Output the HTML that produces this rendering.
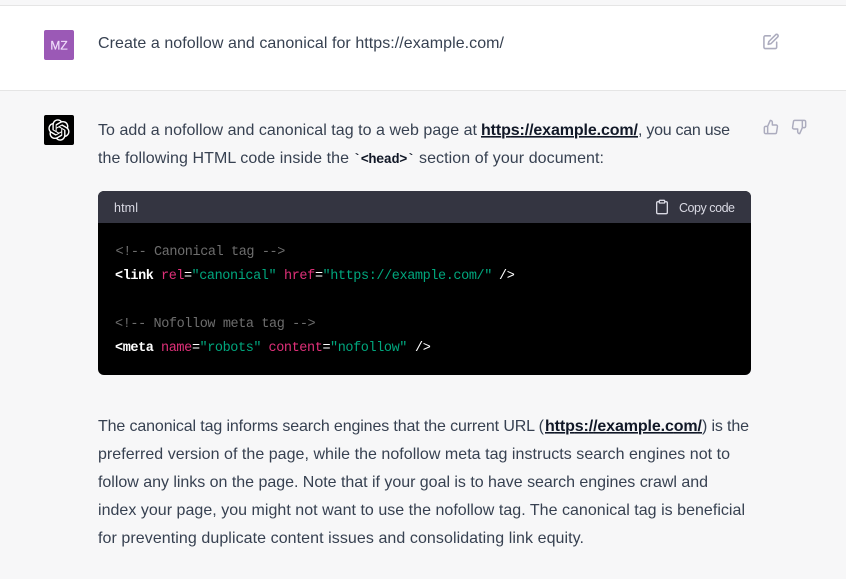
<!DOCTYPE html>
<html><head><meta charset="utf-8"><style>
html,body{margin:0;padding:0;width:846px;height:579px;overflow:hidden;background:#f7f7f8}
svg{display:block;position:absolute;left:0;top:0}
.t{font:16px "Liberation Sans",sans-serif;fill:#374151}
.b{font:bold 16px "Liberation Sans",sans-serif;fill:#111827}
.m{font:13.5px "Liberation Mono",monospace;letter-spacing:-.4px;fill:#fff}
.s{font:12.5px "Liberation Sans",sans-serif;fill:#d9d9e3}
.c{fill:#6e6e6e}.a{fill:#df3079}.g{fill:#00a67d}
.i{fill:none;stroke:#acacbe;stroke-width:2.2;stroke-linecap:round;stroke-linejoin:round}
</style></head><body>
<svg width="846" height="579" viewBox="0 0 846 579" xml:space="preserve">
<rect width="846" height="579" fill="#f7f7f8"/>
<rect y="6" width="846" height="85" fill="#fff"/>
<rect y="5" width="846" height="1" fill="#e5e5e5"/>
<rect y="90" width="846" height="1" fill="#e5e5e5"/>

<rect x="44" y="30" width="30" height="30" rx="2" fill="#9b59b6"/>
<text x="59" y="49.500" text-anchor="middle" font-family="Liberation Sans" font-size="12" fill="#f0dcfa" stroke="#f0dcfa" stroke-width=".2">MZ</text>
<text class="t" x="98" y="48" textLength="406">Create a nofollow and canonical for https://example.com/</text>

<svg x="762.500" y="33" width="17" height="17" viewBox="0 0 24 24"><g class="i"><path d="M11 4H4a2 2 0 0 0-2 2v14a2 2 0 0 0 2 2h14a2 2 0 0 0 2-2v-7"/><path d="M18.5 2.5a2.121 2.121 0 0 1 3 3L12 15l-4 1 1-4 9.500-9.500z"/></g></svg>

<rect x="44" y="115" width="30" height="30" rx="2" fill="#000"/>
<svg x="48" y="119" width="22" height="22" viewBox="0 0 41 41"><path fill="#fff" d="M37.5324 16.8707C37.9808 15.5241 38.1363 14.0974 37.9886 12.6859C37.8409 11.2744 37.3934 9.91076 36.676 8.68622C35.6126 6.83404 33.9882 5.3676 32.0373 4.4985C30.0864 3.62941 27.9098 3.40259 25.8215 3.85078C24.8796 2.7893 23.7219 1.94125 22.4257 1.36341C21.1295 0.785575 19.7249 0.491269 18.3058 0.500197C16.1708 0.495044 14.0893 1.16803 12.3614 2.42214C10.6335 3.67624 9.34853 5.44666 8.6917 7.47815C7.30085 7.76286 5.98686 8.3414 4.8377 9.17505C3.68854 10.0087 2.73073 11.0782 2.02839 12.312C0.956464 14.1591 0.498905 16.2988 0.721698 18.4228C0.944492 20.5467 1.83612 22.5449 3.268 24.1293C2.81966 25.4759 2.66413 26.9026 2.81182 28.3141C2.95951 29.7256 3.40701 31.0892 4.12437 32.3138C5.18791 34.1659 6.8123 35.6322 8.76321 36.5013C10.7141 37.3704 12.8907 37.5973 14.9789 37.1492C15.9208 38.2107 17.0786 39.0587 18.3747 39.6366C19.6709 40.2144 21.0755 40.5087 22.4946 40.4998C24.6307 40.5054 26.7133 39.8321 28.4418 38.5772C30.1704 37.3223 31.4556 35.5506 32.1119 33.5179C33.5027 33.2332 34.8167 32.6547 35.9659 31.821C37.115 30.9874 38.0728 29.9178 38.7752 28.684C39.8458 26.8371 40.3023 24.6979 40.0789 22.5748C39.8556 20.4517 38.9639 18.4544 37.5324 16.8707ZM22.4978 37.8849C20.7443 37.8874 19.0459 37.2733 17.6994 36.1501C17.7601 36.117 17.8666 36.0586 17.936 36.0161L25.9004 31.4156C26.1003 31.3019 26.2663 31.137 26.3813 30.9378C26.4964 30.7386 26.5563 30.5124 26.5549 30.2825V19.0542L29.9213 20.998C29.9389 21.0068 29.9541 21.0198 29.9656 21.0359C29.977 21.052 29.9842 21.0707 29.9867 21.0902V30.3889C29.9842 32.375 29.1946 34.2791 27.7909 35.6841C26.3872 37.0892 24.4838 37.8806 22.4978 37.8849ZM6.39227 31.0064C5.51397 29.4888 5.19742 27.7107 5.49804 25.9832C5.55718 26.0187 5.66048 26.0818 5.73461 26.1244L13.699 30.7248C13.8975 30.8408 14.1233 30.902 14.3532 30.902C14.583 30.902 14.8088 30.8408 15.0073 30.7248L24.731 25.1103V28.9979C24.7321 29.0177 24.7283 29.0376 24.7199 29.0556C24.7115 29.0736 24.6988 29.0893 24.6829 29.1012L16.6317 33.7497C14.9096 34.7416 12.8643 35.0097 10.9447 34.4954C9.02506 33.9811 7.38785 32.7263 6.39227 31.0064ZM4.29707 13.6194C5.17156 12.0998 6.55279 10.9364 8.19885 10.3327C8.19885 10.4013 8.19491 10.5228 8.19491 10.6071V19.808C8.19351 20.0378 8.25334 20.2638 8.36823 20.4629C8.48312 20.6619 8.64893 20.8267 8.84863 20.9404L18.5723 26.5542L15.206 28.4979C15.1894 28.5089 15.1703 28.5155 15.1505 28.5173C15.1307 28.5191 15.1107 28.516 15.0924 28.5082L7.04046 23.8557C5.32135 22.8601 4.06716 21.2235 3.55289 19.3046C3.03862 17.3858 3.30624 15.3413 4.29707 13.6194ZM31.955 20.0556L22.2312 14.4411L25.5976 12.4981C25.6142 12.4872 25.6333 12.4805 25.6531 12.4787C25.6729 12.4769 25.6928 12.4801 25.7111 12.4879L33.7631 17.1364C34.9967 17.849 36.0017 18.8982 36.6606 20.1613C37.3194 21.4244 37.6047 22.849 37.4832 24.2684C37.3617 25.6878 36.8382 27.0432 35.9743 28.1759C35.1103 29.3086 33.9415 30.1717 32.6047 30.6641C32.6047 30.5947 32.6047 30.4733 32.6047 30.3889V21.188C32.6066 20.9586 32.5474 20.7328 32.4332 20.5338C32.319 20.3348 32.154 20.1698 31.955 20.0556ZM35.3055 15.0128C35.2464 14.9765 35.1431 14.9142 35.069 14.8717L27.1045 10.2712C26.906 10.1554 26.6803 10.0943 26.4504 10.0943C26.2206 10.0943 25.9948 10.1554 25.7963 10.2712L16.0726 15.8858V11.9982C16.0715 11.9783 16.0753 11.9585 16.0837 11.9405C16.0921 11.9225 16.1048 11.9068 16.1207 11.8949L24.1719 7.25025C25.4053 6.53903 26.8158 6.19376 28.2383 6.25482C29.6608 6.31589 31.0364 6.78077 32.2044 7.59508C33.3723 8.40939 34.2842 9.53945 34.8334 10.8531C35.3826 12.1667 35.5464 13.6095 35.3055 15.0128ZM14.2424 21.9419L10.8752 19.9981C10.8576 19.9893 10.8423 19.9763 10.8309 19.9602C10.8195 19.9441 10.8122 19.9254 10.8098 19.9058V10.6071C10.8107 9.18295 11.2173 7.78848 11.9819 6.58696C12.7466 5.38544 13.8377 4.42659 15.1275 3.82264C16.4173 3.21869 17.8524 2.99464 19.2649 3.1767C20.6775 3.35876 22.0089 3.93941 23.1034 4.85067C23.0427 4.88379 22.937 4.94215 22.8668 4.98473L14.9024 9.58517C14.7025 9.69878 14.5366 9.86356 14.4215 10.0626C14.3065 10.2616 14.2466 10.4877 14.2479 10.7175L14.2424 21.9419ZM16.071 17.9991L20.4018 15.4978L24.7325 17.9975V22.9985L20.4018 25.4983L16.071 22.9985V17.9991Z"/></svg>

<text class="t" x="98" y="135" textLength="379">To add a nofollow and canonical tag to a web page at</text>
<text class="b" x="481" y="135" textLength="157" style="text-decoration:underline">https://example.com/</text>
<text class="t" x="638" y="135" textLength="92">, you can use</text>

<svg x="763" y="119" width="16" height="16" viewBox="0 0 24 24"><path class="i" d="M14 9V5a3 3 0 0 0-3-3l-4 9v11h11.280a2 2 0 0 0 2-1.700l1.380-9a2 2 0 0 0-2-2.300zM7 22H4a2 2 0 0 1-2-2v-7a2 2 0 0 1 2-2h3"/></svg>
<svg x="791" y="119" width="16" height="16" viewBox="0 0 24 24"><path class="i" d="M10 15v4a3 3 0 0 0 3 3l4-9V2H5.720a2 2 0 0 0-2 1.700l-1.380 9a2 2 0 0 0 2 2.300zm7-13h2.670A2.310 2.310 0 0 1 22 4v7a2.310 2.310 0 0 1-2.330 2H17"/></svg>

<text class="t" x="98" y="163" textLength="251">the following HTML code inside the</text>
<text class="m" x="353" y="163" style="font-weight:bold;fill:#111827">`&lt;head&gt;`</text>
<text class="t" x="419" y="163" textLength="185">section of your document:</text>

<rect x="98" y="191" width="653" height="184" rx="6" fill="#000"/>
<path d="M98 223V197a6 6 0 0 1 6-6H745a6 6 0 0 1 6 6V223Z" fill="#343541"/>
<text class="s" x="114" y="212" textLength="24">html</text>
<svg x="654" y="199" width="16" height="16" viewBox="0 0 24 24"><g fill="none" stroke="#d9d9e3" stroke-width="2" stroke-linecap="round" stroke-linejoin="round"><path d="M16 4h2a2 2 0 0 1 2 2v14a2 2 0 0 1-2 2H6a2 2 0 0 1-2-2V6a2 2 0 0 1 2-2h2"/><rect x="8" y="2" width="8" height="4" rx="1"/></g></svg>
<text class="s" x="679" y="212" textLength="56">Copy code</text>

<text class="m c" x="115.500" y="255">&lt;!-- Canonical tag --&gt;</text>
<text class="m" x="115" y="279" style="font-weight:bold">&lt;link</text>
<text class="m a" x="161" y="279">rel</text>
<text class="m" x="184" y="279">=</text>
<text class="m g" x="191.500" y="279">"canonical"</text>
<text class="m a" x="284" y="279">href</text>
<text class="m" x="315" y="279">=</text>
<text class="m g" x="322.500" y="279">"https://example.com/"</text>
<text class="m" x="499" y="279">/&gt;</text>
<text class="m c" x="115" y="327">&lt;!-- Nofollow meta tag --&gt;</text>
<text class="m" x="115" y="351" style="font-weight:bold">&lt;meta</text>
<text class="m a" x="161" y="351">name</text>
<text class="m" x="192" y="351">=</text>
<text class="m g" x="199.500" y="351">"robots"</text>
<text class="m a" x="268.500" y="351">content</text>
<text class="m" x="322.500" y="351">=</text>
<text class="m g" x="330" y="351">"nofollow"</text>
<text class="m" x="415" y="351">/&gt;</text>

<text class="t" x="98" y="431" textLength="446">The canonical tag informs search engines that the current URL (</text>
<text class="b" x="545" y="431" textLength="157" style="text-decoration:underline">https://example.com/</text>
<text class="t" x="702" y="431" textLength="47">) is the</text>
<text class="t" x="98" y="459" textLength="632">preferred version of the page, while the nofollow meta tag instructs search engines not to</text>
<text class="t" x="98" y="487" textLength="610">follow any links on the page. Note that if your goal is to have search engines crawl and</text>
<text class="t" x="98" y="515" textLength="647">index your page, you might not want to use the nofollow tag. The canonical tag is beneficial</text>
<text class="t" x="98" y="543" textLength="486">for preventing duplicate content issues and consolidating link equity.</text>
</svg>
</body></html>
